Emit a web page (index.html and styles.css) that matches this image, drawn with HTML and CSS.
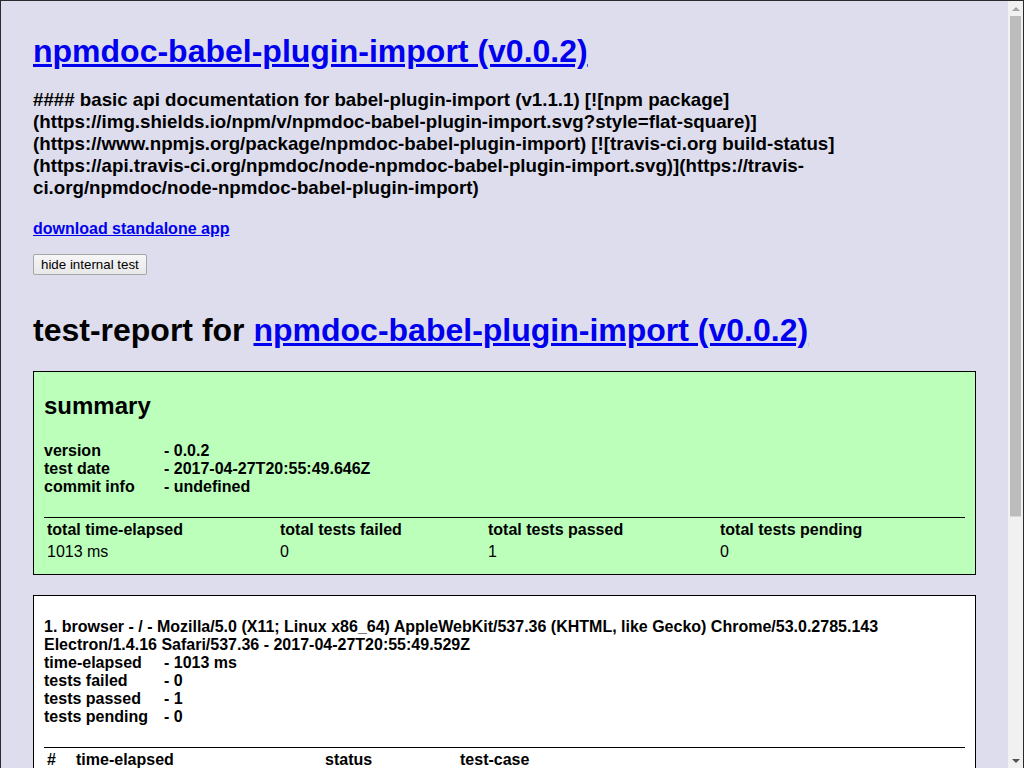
FILE: index.html
```html
<!DOCTYPE html>
<html lang="en">
<head>
<meta charset="utf-8">
<title>npmdoc-babel-plugin-import test report</title>
<link rel="stylesheet" href="styles.css">
</head>
<body>
<div class="page">
  <h1 class="title"><a href="#">npmdoc-babel-plugin-import (v0.0.2)</a></h1>
  <h3 class="desc">#### basic api documentation for babel-plugin-import (v1.1.1) [![npm package](https://img.shields.io/npm/v/npmdoc-babel-plugin-import.svg?style=flat-square)](https://www.npmjs.org/package/npmdoc-babel-plugin-import) [![travis-ci.org build-status](https://api.travis-ci.org/npmdoc/node-npmdoc-babel-plugin-import.svg)](https://travis-ci.org/npmdoc/node-npmdoc-babel-plugin-import)</h3>
  <h4 class="download"><a href="#">download standalone app</a></h4>
  <div class="controls"><button class="toggle-btn" type="button">hide internal test</button></div>

  <div class="report">
    <h1 class="report-title">test-report for <a href="#">npmdoc-babel-plugin-import (v0.0.2)</a></h1>

    <div class="summary">
      <h2 class="summary-title">summary</h2>
      <div class="meta">
        <div><span class="label">version</span>- 0.0.2</div>
        <div><span class="label">test date</span>- 2017-04-27T20:55:49.646Z</div>
        <div><span class="label">commit info</span>- undefined</div>
      </div>
      <table class="stats">
        <thead>
          <tr><th class="s-time">total time-elapsed</th><th class="s-failed">total tests failed</th><th class="s-passed">total tests passed</th><th>total tests pending</th></tr>
        </thead>
        <tbody>
          <tr><td>1013 ms</td><td>0</td><td>1</td><td>0</td></tr>
        </tbody>
      </table>
    </div>

    <div class="platform">
      <div class="platform-title">1. browser - / - Mozilla/5.0 (X11; Linux x86_64) AppleWebKit/537.36 (KHTML, like Gecko) Chrome/53.0.2785.143 Electron/1.4.16 Safari/537.36 - 2017-04-27T20:55:49.529Z</div>
      <div class="meta">
        <div><span class="label">time-elapsed</span>- 1013 ms</div>
        <div><span class="label">tests failed</span>- 0</div>
        <div><span class="label">tests passed</span>- 1</div>
        <div><span class="label">tests pending</span>- 0</div>
      </div>
      <table class="cases">
        <thead>
          <tr><th class="c-num">#</th><th class="c-time">time-elapsed</th><th class="c-status">status</th><th>test-case</th></tr>
        </thead>
        <tbody>
          <tr><td>1</td><td>1013 ms</td><td class="passed">passed</td><td>testCase_buildApidoc_default</td></tr>
        </tbody>
      </table>
    </div>
  </div>

  <div class="footer">[ this app was created with <a href="#">utility2</a> ]</div>
</div>

<div class="frame" aria-hidden="true"></div>
<div class="scrollbar" aria-hidden="true">
  <div class="sb-arrow sb-up"></div>
  <div class="sb-track"><div class="sb-thumb"></div></div>
  <div class="sb-arrow sb-down"></div>
</div>
</body>
</html>
```

FILE: styles.css
```css
html {
  background: #dde;
}
body {
  margin: 0;
  font-family: "Liberation Sans", Arial, Helvetica, sans-serif;
  color: #000;
  background: #dde;
}
a {
  color: #00e;
}
.page {
  padding: 12px 48px 0 33px;
}
.title {
  font-size: 32px;
  margin: 21px 0 19px;
}
.desc {
  font-size: 18.72px;
  margin: 19px 0 0;
}
.download {
  font-size: 16px;
  margin: 21px 0 16px;
}
.controls {
  height: 21px;
}
.toggle-btn {
  display: block;
  height: 21px;
  padding: 1px 7px;
  font: 13.333px "Liberation Sans", Arial, sans-serif;
  color: #000;
  background: linear-gradient(#f6f6f6, #e8e8e8);
  border: 1px solid #a6a6a6;
  border-radius: 2px;
}
.report-title {
  font-size: 32px;
  margin: 37px 0 22px;
}
.summary {
  background: #bfb;
  border: 1px solid #000;
  padding: 0 10px 10px;
  font-weight: bold;
}
.summary-title {
  font-size: 24px;
  margin: 20px 0 22px;
}
.label {
  display: inline-block;
  width: 120px;
}
table {
  width: 100%;
  border-top: 1px solid #000;
  border-spacing: 2px;
  text-align: left;
  margin-top: 21px;
}
th, td {
  padding: 1px;
  text-align: left;
}
td {
  font-weight: normal;
}
.stats .s-time {
  width: 229px;
}
.stats .s-failed {
  width: 204px;
}
.stats .s-passed {
  width: 228px;
}
.cases .c-num {
  width: 25px;
}
.cases .c-time {
  width: 245px;
}
.cases .c-status {
  width: 131px;
}
.platform {
  background: #fff;
  border: 1px solid #000;
  padding: 0 10px 10px;
  margin-top: 20px;
  font-weight: bold;
}
.platform-title {
  margin-top: 22px;
}
.cases tbody tr:nth-child(odd) {
  background: #bfb;
}
.cases .passed {
  background: #7f7;
}
.footer {
  text-align: center;
  margin: 40px 0 200px;
  font-weight: bold;
}

/* window frame and scrollbar drawn over the page */
.frame {
  position: fixed;
  inset: 0;
  border-top: 1px solid #2a2a2a;
  border-left: 1px solid #2a2a2a;
  border-right: 1px solid #2a2a2a;
  pointer-events: none;
}
.scrollbar {
  position: fixed;
  top: 1px;
  right: 1px;
  bottom: 0;
  width: 15px;
  background: #f1f1f1;
  display: flex;
  flex-direction: column;
}
.sb-arrow {
  height: 15px;
  display: flex;
  align-items: center;
  justify-content: center;
}
.sb-up::before {
  content: "";
  border-left: 4px solid transparent;
  border-right: 4px solid transparent;
  border-bottom: 4px solid #a3a3a3;
}
.sb-down::before {
  content: "";
  border-left: 4px solid transparent;
  border-right: 4px solid transparent;
  border-top: 4px solid #505050;
}
.sb-track {
  flex: 1;
  padding: 0 2px;
}
.sb-thumb {
  margin-top: 0;
  height: 500px;
  background: #bcbcbc;
  border-bottom: 1px solid #d8d8d8;
}
```
